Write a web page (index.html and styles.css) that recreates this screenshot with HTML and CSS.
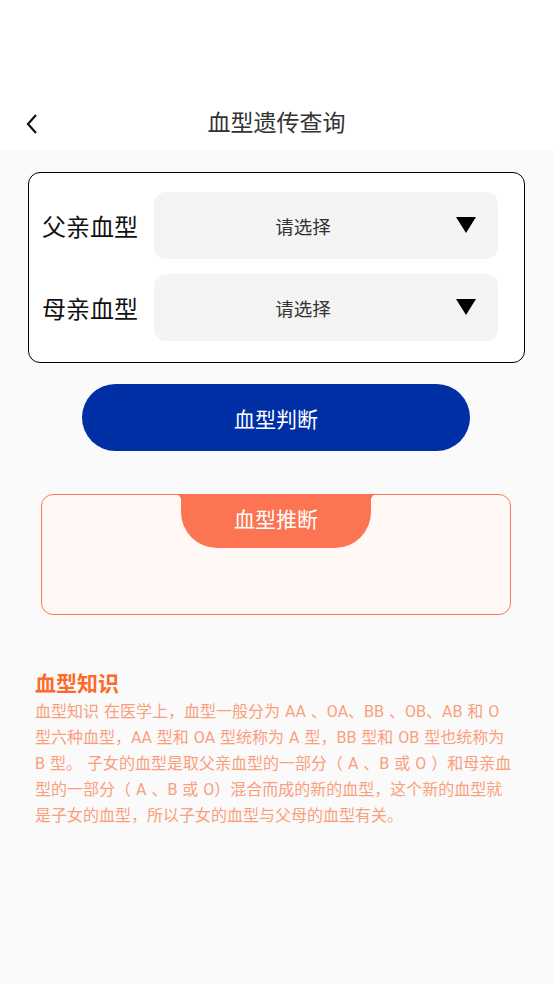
FILE: index.html
```html
<!DOCTYPE html>
<html lang="zh-CN">
  <head>
    <meta charset="UTF-8">
    <meta name="viewport" content="width=device-width, initial-scale=1.0">
    <title>血型遗传查询</title>
    <link rel="stylesheet" href="styles.css">
  </head>
  <body>
    <div class="header">
      <span class="back">
        <svg width="14" height="22" viewBox="0 0 14 22"><path d="M11 2 L3 11 L11 20" fill="none" stroke="#111" stroke-width="2.2"/></svg>
      </span>
      <h1>血型遗传查询</h1>
    </div>
    <div class="main">
      <div class="form-card">
        <div class="row">
          <span class="label">父亲血型</span>
          <div class="select">
            <span>请选择</span>
            <i class="arrow"></i>
          </div>
        </div>
        <div class="row">
          <span class="label">母亲血型</span>
          <div class="select">
            <span>请选择</span>
            <i class="arrow"></i>
          </div>
        </div>
      </div>
      <button class="judge">血型判断</button>
      <div class="result">
        <div class="tab">血型推断</div>
      </div>
      <div class="knowledge">
        <h2>血型知识</h2>
        <p>血型知识 在医学上，血型一般分为 AA 、OA、BB 、OB、AB 和 O 型六种血型，AA 型和 OA 型统称为 A 型，BB 型和 OB 型也统称为 B 型。 子女的血型是取父亲血型的一部分（ A 、B 或 O ）和母亲血型的一部分（ A 、B 或 O）混合而成的新的血型，这个新的血型就是子女的血型，所以子女的血型与父母的血型有关。</p>
      </div>
    </div>
  </body>
</html>
```

FILE: styles.css
```css
body {
  margin: 0;
  font-family: Roboto, "Noto Sans CJK SC", sans-serif;
  background-color: #fafafa;
}

.header {
  background-color: #fff;
  height: 150px;
  position: relative;
  display: flex;
  align-items: flex-end;
  justify-content: center;
}

.header h1 {
  margin: 0 0 11px;
  font-size: 23px;
  font-weight: 400;
  line-height: 30px;
  color: #333;
}

.back {
  position: absolute;
  left: 25px;
  top: 113px;
}

.main {
  padding: 22px 28px 0;
}

.form-card {
  border: 1.5px solid #000;
  border-radius: 12px;
  background-color: #fff;
  padding: 19px 26px 21px 13px;
  display: flex;
  flex-direction: column;
  gap: 15px;
}

.row {
  display: flex;
  align-items: center;
}

.label {
  width: 112px;
  font-size: 24px;
  color: #111;
}

.select {
  flex: 1;
  height: 67px;
  padding-right: 46px;
  border-radius: 12px;
  background-color: #f4f4f4;
  display: flex;
  align-items: center;
  justify-content: center;
  position: relative;
  font-size: 18.5px;
  color: #333;
}

.arrow {
  position: absolute;
  right: 22px;
  top: 25px;
  width: 0;
  height: 0;
  border-left: 10px solid transparent;
  border-right: 10px solid transparent;
  border-top: 16px solid #000;
}

.judge {
  display: block;
  width: 388px;
  height: 67px;
  margin: 21px auto 0 54px;
  border: none;
  border-radius: 34px;
  background-color: #002fa5;
  color: #fff;
  font-family: inherit;
  font-size: 21px;
}

.result {
  position: relative;
  margin: 43px 14px 0 13px;
  height: 119px;
  border: 1px solid #f57a5a;
  border-radius: 12px;
  background-color: #fff8f5;
}

.tab {
  position: absolute;
  left: 139px;
  top: -1px;
  width: 190px;
  height: 54px;
  border-radius: 0 0 36px 36px;
  background-color: #fd7452;
  color: #fff;
  font-size: 21px;
  line-height: 52px;
  text-align: center;
}

.tab::before,
.tab::after {
  content: "";
  position: absolute;
  top: 0;
  width: 7px;
  height: 7px;
}

.tab::before {
  left: -7px;
  background: radial-gradient(circle at 0 100%, transparent 7px, #fd7452 7.5px);
}

.tab::after {
  right: -7px;
  background: radial-gradient(circle at 100% 100%, transparent 7px, #fd7452 7.5px);
}

.knowledge {
  margin-top: 54px;
  padding: 0 7px;
}

.knowledge h2 {
  margin: 0;
  font-size: 21px;
  line-height: 30px;
  font-weight: 700;
  color: #fc6a2c;
}

.knowledge p {
  margin: 0;
  width: 482px;
  font-size: 16px;
  line-height: 26px;
  word-spacing: 1px;
  color: #fa9e7c;
}
```
